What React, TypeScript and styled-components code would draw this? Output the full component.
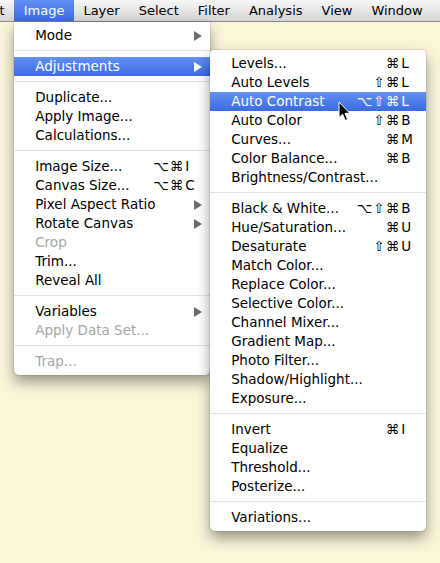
import React from "react";
import styled, { createGlobalStyle, css } from "styled-components";

const GlobalStyle = createGlobalStyle`
  html, body {
    margin: 0;
    padding: 0;
    background: #fbf6da;
  }
  body {
    font-family: "DejaVu Sans", Verdana, sans-serif;
    font-size: 13.5px;
    color: #000;
  }
`;

const highlight = css`
  background: linear-gradient(#6390f2, #3b6be1);
  color: #fff;
`;

const Screen = styled.div`
  position: relative;
  width: 440px;
  height: 563px;
  background: #fbf6da;
  overflow: hidden;
`;

const MenuBar = styled.div`
  display: flex;
  height: 21px;
  border-bottom: 1px solid #8a8a8a;
  background: linear-gradient(#f7f7f7, #d4d4d4);
`;

const BarItem = styled.div<{ $active?: boolean; $first?: boolean }>`
  position: relative;
  height: 21px;
  line-height: 21px;
  padding: 0 9.5px;
  font-size: 13px;
  white-space: nowrap;
  margin-left: ${(p) => (p.$first ? "-30px" : "0")};
  ${(p) => p.$active && highlight}
`;

const Menu = styled.div<{ $width: number }>`
  position: absolute;
  width: ${(p) => p.$width}px;
  padding: 4px 0;
  background: #fff;
  color: #000;
  font-size: 13.5px;
  border-radius: 0 0 5px 5px;
  box-shadow: 0 0 0 1px rgba(0, 0, 0, 0.08), 0 7px 14px rgba(0, 0, 0, 0.4);
  z-index: 2;
`;

const MainMenu = styled(Menu)`
  top: 22px;
  left: 0;
`;

const SubMenu = styled(Menu)`
  top: -7px;
  left: 100%;
  border-radius: 4px 4px 5px 5px;
  z-index: 3;
`;

const Row = styled.div<{ $active?: boolean; $disabled?: boolean; $keyRight: number }>`
  position: relative;
  display: flex;
  align-items: center;
  height: 19px;
  line-height: 19px;
  padding: 0 ${(p) => p.$keyRight}px 0 21px;
  white-space: nowrap;
  color: ${(p) => (p.$disabled ? "#a6a6a6" : "#000")};
  ${(p) => p.$active && highlight}
`;

const Label = styled.span`
  flex: 1;
`;

const Shortcut = styled.span`
  display: flex;
`;

const Mods = styled.span`
  text-align: right;
  letter-spacing: 1px;
`;

const Key = styled.span`
  width: 13px;
  padding-left: 1px;
`;

const Arrow = styled.span<{ $active?: boolean }>`
  width: 0;
  height: 0;
  margin-right: -2px;
  border-top: 5px solid transparent;
  border-bottom: 5px solid transparent;
  border-left: 8px solid ${(p) => (p.$active ? "#fff" : "#6e6e6e")};
`;

const Separator = styled.div`
  height: 1px;
  margin: 5px 0 6px;
  background: #e2e2e2;
`;

const Cursor = styled.svg`
  position: absolute;
  left: 338px;
  top: 101px;
  z-index: 5;
`;

type Item =
  | "-"
  | {
      label: string;
      keys?: string;
      sub?: boolean;
      active?: boolean;
      disabled?: boolean;
    };

const adjustments: Item[] = [
  { label: "Levels...", keys: "⌘L" },
  { label: "Auto Levels", keys: "⇧⌘L" },
  { label: "Auto Contrast", keys: "⌥⇧⌘L", active: true },
  { label: "Auto Color", keys: "⇧⌘B" },
  { label: "Curves...", keys: "⌘M" },
  { label: "Color Balance...", keys: "⌘B" },
  { label: "Brightness/Contrast..." },
  "-",
  { label: "Black & White...", keys: "⌥⇧⌘B" },
  { label: "Hue/Saturation...", keys: "⌘U" },
  { label: "Desaturate", keys: "⇧⌘U" },
  { label: "Match Color..." },
  { label: "Replace Color..." },
  { label: "Selective Color..." },
  { label: "Channel Mixer..." },
  { label: "Gradient Map..." },
  { label: "Photo Filter..." },
  { label: "Shadow/Highlight..." },
  { label: "Exposure..." },
  "-",
  { label: "Invert", keys: "⌘I" },
  { label: "Equalize" },
  { label: "Threshold..." },
  { label: "Posterize..." },
  "-",
  { label: "Variations..." },
];

const imageMenu: Item[] = [
  { label: "Mode", sub: true },
  "-",
  { label: "Adjustments", sub: true, active: true },
  "-",
  { label: "Duplicate..." },
  { label: "Apply Image..." },
  { label: "Calculations..." },
  "-",
  { label: "Image Size...", keys: "⌥⌘I" },
  { label: "Canvas Size...", keys: "⌥⌘C" },
  { label: "Pixel Aspect Ratio", sub: true },
  { label: "Rotate Canvas", sub: true },
  { label: "Crop", disabled: true },
  { label: "Trim..." },
  { label: "Reveal All" },
  "-",
  { label: "Variables", sub: true },
  { label: "Apply Data Set...", disabled: true },
  "-",
  { label: "Trap...", disabled: true },
];

const MenuRows = ({ items, keyRight, children }: { items: Item[]; keyRight: number; children?: React.ReactNode }) => (
  <>
    {items.map((item, i) => {
      if (item === "-") return <Separator key={i} />;
      const mods = item.keys ? item.keys.slice(0, -1) : "";
      const key = item.keys ? item.keys.slice(-1) : "";
      return (
        <Row
          key={i}
          $active={item.active}
          $disabled={item.disabled}
          $keyRight={item.sub ? 10 : keyRight}
        >
          <Label>{item.label}</Label>
          {item.keys && (
            <Shortcut>
              <Mods>{mods}</Mods>
              <Key>{key}</Key>
            </Shortcut>
          )}
          {item.sub && <Arrow $active={item.active} />}
          {item.sub && item.active && children}
        </Row>
      );
    })}
  </>
);

const bar = ["Edit", "Image", "Layer", "Select", "Filter", "Analysis", "View", "Window"];

export default function App() {
  return (
    <Screen>
      <GlobalStyle />
      <MenuBar>
        {bar.map((name, i) => (
          <BarItem key={name} $first={i === 0} $active={name === "Image"}>
            {name}
            {name === "Image" && (
              <MainMenu $width={196}>
                <MenuRows items={imageMenu} keyRight={12}>
                  <SubMenu $width={216}>
                    <MenuRows items={adjustments} keyRight={12} />
                  </SubMenu>
                </MenuRows>
              </MainMenu>
            )}
          </BarItem>
        ))}
      </MenuBar>
      <Cursor width="14" height="21" viewBox="0 0 14 21">
        <path
          d="M1 1 L1 16.5 L4.6 13.2 L7.2 19.4 L9.6 18.4 L7 12.3 L11.8 12.3 Z"
          fill="#000"
          stroke="#fff"
          strokeWidth="1"
          strokeLinejoin="round"
        />
      </Cursor>
    </Screen>
  );
}
